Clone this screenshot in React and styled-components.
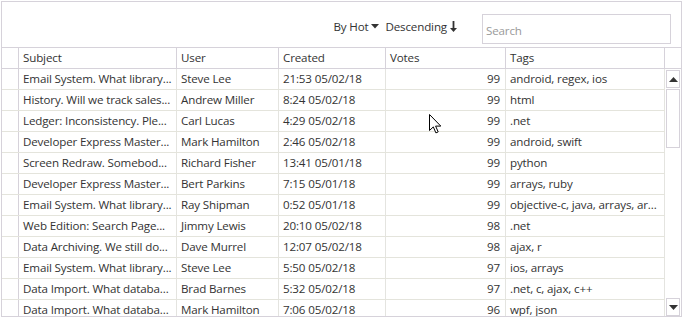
import React from 'react';
import styled, { createGlobalStyle } from 'styled-components';

const GlobalStyle = createGlobalStyle`
  * { box-sizing: border-box; }
  body {
    margin: 0;
    background: #fff;
    font-family: 'Open Sans', 'Noto Sans', sans-serif;
    font-size: 11.6px;
    letter-spacing: -0.15px;
    color: #333;
  }
`;

const COLS = [17, 158, 102, 107, 120, 159];

const rows = [
  ['Email System. What library...', 'Steve Lee', '21:53 05/02/18', 99, 'android, regex, ios'],
  ['History. Will we track sales...', 'Andrew Miller', '8:24 05/02/18', 99, 'html'],
  ['Ledger: Inconsistency. Ple...', 'Carl Lucas', '4:29 05/02/18', 99, '.net'],
  ['Developer Express Master...', 'Mark Hamilton', '2:46 05/02/18', 99, 'android, swift'],
  ['Screen Redraw. Somebod...', 'Richard Fisher', '13:41 05/01/18', 99, 'python'],
  ['Developer Express Master...', 'Bert Parkins', '7:15 05/01/18', 99, 'arrays, ruby'],
  ['Email System. What library...', 'Ray Shipman', '0:52 05/01/18', 99, 'objective-c, java, arrays, ar...'],
  ['Web Edition: Search Page...', 'Jimmy Lewis', '20:10 05/02/18', 98, '.net'],
  ['Data Archiving. We still do...', 'Dave Murrel', '12:07 05/02/18', 98, 'ajax, r'],
  ['Email System. What library...', 'Steve Lee', '5:50 05/02/18', 97, 'ios, arrays'],
  ['Data Import. What databa...', 'Brad Barnes', '5:32 05/02/18', 97, '.net, c, ajax, c++'],
  ['Data Import. What databa...', 'Mark Hamilton', '7:06 05/02/18', 96, 'wpf, json'],
];

const Frame = styled.div`
  position: relative;
  margin: 1px 0 0 1px;
  width: 681px;
  height: 316px;
  border: 1px solid #d6d2da;
  display: flex;
  flex-direction: column;
  overflow: hidden;
`;

const Toolbar = styled.div`
  height: 45px;
  flex: none;
  display: flex;
  align-items: flex-start;
  justify-content: flex-end;
  padding: 12px 10px 0 0;
`;

const SortGroup = styled.div`
  display: flex;
  align-items: center;
  height: 24px;
  margin-right: 25px;
  gap: 6px;
  color: #333;
`;

const SortItem = styled.span`
  display: inline-flex;
  align-items: center;
  gap: 3px;
  white-space: nowrap;
`;

const SearchBox = styled.div`
  width: 189px;
  height: 30px;
  border: 1px solid #d6d2da;
  display: flex;
  align-items: center;
  padding: 3px 0 0 3px;
  color: #9a9a9a;
`;

const HeaderRow = styled.div`
  display: flex;
  height: 22px;
  flex: none;
  border-top: 1px solid #d6d2da;
  border-bottom: 1px solid #d6d2da;
`;

const HeadCell = styled.div`
  width: ${p => p.$w}px;
  flex: ${p => (p.$w ? 'none' : '1')};
  border-right: ${p => (p.$last ? 'none' : '1px solid #d6d2da')};
  padding: 0 4px;
  line-height: 20px;
  white-space: nowrap;
  overflow: hidden;
`;

const Body = styled.div`
  flex: 1;
  display: flex;
  min-height: 0;
`;

const Rows = styled.div`
  width: ${COLS.reduce((a, b) => a + b, 0)}px;
  flex: none;
  overflow: hidden;
`;

const Row = styled.div`
  display: flex;
  height: 21px;
  border-bottom: 1px solid #e4e4dc;
`;

const Cell = styled.div`
  width: ${p => p.$w}px;
  flex: none;
  border-right: 1px solid ${p => (p.$indicator ? '#d6d2da' : '#e4e4e0')};
  padding: 0 ${p => (p.$right ? 5 : 3)}px 0 4px;
  text-align: ${p => (p.$right ? 'right' : 'left')};
  line-height: 20px;
  white-space: nowrap;
  overflow: hidden;
`;

const ScrollBar = styled.div`
  flex: 1;
  display: flex;
  flex-direction: column;
  padding: 1px 1px 0 1px;
`;

const ScrollButton = styled.div`
  height: 18px;
  flex: none;
  border: 1px solid #d6d2da;
  display: flex;
  align-items: center;
  justify-content: center;
`;

const Thumb = styled.div`
  height: 59px;
  margin-top: 1px;
  border: 1px solid #d6d2da;
  flex: none;
`;

const Track = styled.div`
  flex: 1;
`;

const Cursor = styled.svg`
  position: absolute;
  left: 427px;
  top: 112px;
`;

const Caret = () => (
  <svg width="8" height="5" viewBox="0 0 8 5">
    <path d="M0 0h8L4 4.5z" fill="#333" />
  </svg>
);

const DownArrow = () => (
  <svg width="7" height="11" viewBox="0 0 7 11">
    <path d="M2.6 0h1.8v7H7L3.5 11 0 7h2.6z" fill="#333" />
  </svg>
);

const Tri = ({ up }) => (
  <svg width="9" height="5" viewBox="0 0 9 5">
    <path d={up ? 'M0 5h9L4.5 0z' : 'M0 0h9L4.5 5z'} fill="#333" />
  </svg>
);

export default function App() {
  const heads = ['', 'Subject', 'User', 'Created', 'Votes', 'Tags'];
  return (
    <>
      <GlobalStyle />
      <Frame>
        <Toolbar>
          <SortGroup>
            <SortItem>By Hot <Caret /></SortItem>
            <SortItem>Descending <DownArrow /></SortItem>
          </SortGroup>
          <SearchBox>Search</SearchBox>
        </Toolbar>
        <HeaderRow>
          {heads.map((h, i) => (
            <HeadCell key={i} $w={COLS[i]}>{h}</HeadCell>
          ))}
          <HeadCell $last />
        </HeaderRow>
        <Body>
          <Rows>
            {rows.map((r, i) => (
              <Row key={i}>
                <Cell $w={COLS[0]} $indicator />
                <Cell $w={COLS[1]}>{r[0]}</Cell>
                <Cell $w={COLS[2]}>{r[1]}</Cell>
                <Cell $w={COLS[3]}>{r[2]}</Cell>
                <Cell $w={COLS[4]} $right>{r[3]}</Cell>
                <Cell $w={COLS[5]}>{r[4]}</Cell>
              </Row>
            ))}
          </Rows>
          <ScrollBar>
            <ScrollButton><Tri up /></ScrollButton>
            <Thumb />
            <Track />
            <ScrollButton><Tri /></ScrollButton>
          </ScrollBar>
        </Body>
        <Cursor width="12" height="20" viewBox="0 0 12 20">
          <path d="M0.5 0.5v16l3.8-3.6 2.6 6 2.3-1-2.6-5.8h5.2z" fill="#fff" stroke="#000" strokeWidth="1" />
        </Cursor>
      </Frame>
    </>
  );
}
